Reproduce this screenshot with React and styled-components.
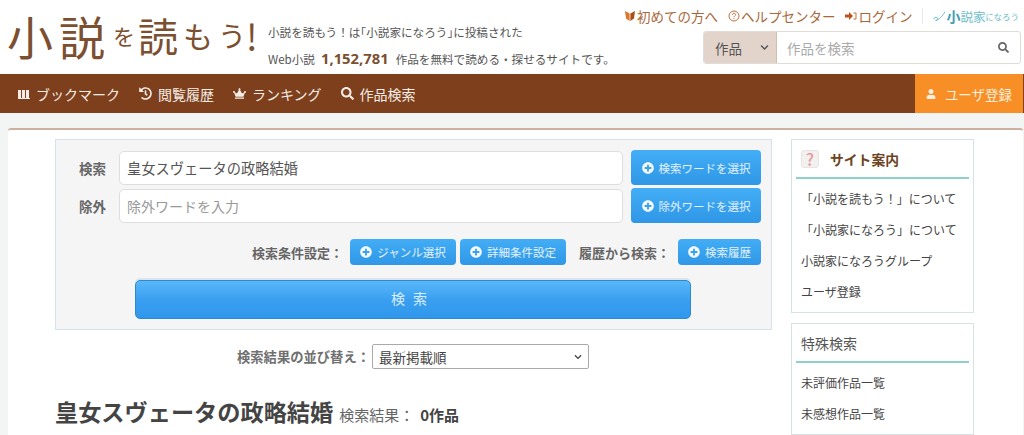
import React from "react";
import styled, { createGlobalStyle } from "styled-components";
import { FaPlusCircle, FaSearch, FaCrown, FaHistory, FaUser, FaChevronDown } from "react-icons/fa";

const FONT = `"Noto Sans CJK JP", "Noto Sans", sans-serif`;

const GlobalStyle = createGlobalStyle`
  html, body {
    margin: 0;
    padding: 0;
    height: 435px;
    overflow: hidden;
    background: #f3f4f4;
    font-family: ${FONT};
    color: #444;
  }
  * { box-sizing: border-box; }
`;

const Header = styled.header`
  height: 74px;
  background: #fff;
  display: flex;
  justify-content: space-between;
`;

const Brand = styled.div`
  display: flex;
  padding: 10px 0 0 7px;
`;

const Logo = styled.h1`
  margin: 0;
  width: 255px;
  height: 50px;
  display: flex;
  align-items: center;
  color: #7b4f30;
  font-weight: 400;
  line-height: 50px;
  white-space: nowrap;
`;

const LogoPart = styled.span`
  font-size: ${(p) => p.$size}px;
  letter-spacing: ${(p) => p.$spacing || 0}px;
  margin-left: ${(p) => p.$gap || 0}px;
`;

const Tagline = styled.div`
  padding: 9px 0 0 6px;
  font-size: 11.6px;
  color: #555;
  line-height: 26px;
  white-space: nowrap;
`;

const Bracket = styled.span`
  font-feature-settings: "halt";
`;

const Count = styled.strong`
  color: #7b4f30;
  font-family: "Open Sans", ${FONT};
  font-size: 14.8px;
  margin: 0 7px 0 6px;
`;

const TopRight = styled.div`
  padding: 6px 3px 0 0;
  display: flex;
  flex-direction: column;
  align-items: flex-end;
`;

const TopLinks = styled.div`
  display: flex;
  align-items: center;
  height: 20px;
  font-size: 13.5px;
  color: #a9683a;
  white-space: nowrap;
`;

const TopLink = styled.a`
  display: flex;
  align-items: center;
  margin-right: 10px;
  gap: 1px;
`;

const TopIcon = styled.span`
  display: flex;
  justify-content: center;
  width: 12px;
`;

const SisterLogo = styled.span`
  border-left: 1px solid #e3e8e8;
  padding-left: 10px;
  margin-right: 2px;
  height: 16px;
  display: flex;
  align-items: center;
  color: #6bbccb;
`;

const SisterPart = styled.span`
  font-size: ${(p) => p.$size}px;
  font-weight: ${(p) => (p.$bold ? 700 : 400)};
  color: ${(p) => (p.$bold ? "#3f9fb2" : "#6bbccb")};
`;

const SearchBox = styled.div`
  margin-top: 5px;
  width: 318px;
  height: 33px;
  display: flex;
  border: 1px solid #e0dcd8;
  border-radius: 3px;
  background: #fff;
  overflow: hidden;
`;

const SearchKind = styled.div`
  width: 73px;
  background: #e3d4cb;
  border-right: 1px solid #d2bdb0;
  display: flex;
  align-items: center;
  justify-content: space-between;
  padding: 0 7px 0 11px;
  font-size: 13.5px;
  color: #555;
`;

const SearchHint = styled.div`
  flex: 1;
  display: flex;
  align-items: center;
  justify-content: space-between;
  padding: 0 11px 0 10px;
  font-size: 13.5px;
  color: #aaa;
`;

const Nav = styled.nav`
  height: 39px;
  background: #7e401c;
  display: flex;
  justify-content: space-between;
  padding-right: 1px;
  color: #fff;
`;

const NavList = styled.div`
  display: flex;
  align-items: center;
  padding-left: 18px;
  gap: 19px;
`;

const NavItem = styled.a`
  display: flex;
  align-items: center;
  gap: 6px;
  font-size: 14px;
  color: #f4ece6;
`;

const NavIcon = styled.span`
  display: flex;
  font-size: 13px;
`;

const SignUp = styled.a`
  width: 108px;
  background: #f78f26;
  display: flex;
  align-items: center;
  justify-content: center;
  gap: 9px;
  font-size: 13.5px;
  color: #fdeedd;
`;

const Sheet = styled.div`
  margin: 15px 1px 0 8px;
  background: #fff;
  border-top: 2px solid #cdb09f;
  border-radius: 3px 3px 0 0;
  padding: 9px 49px 0 47px;
  display: flex;
  justify-content: space-between;
  height: 320px;
`;

const Main = styled.main`
  width: 717px;
`;

const Panel = styled.section`
  height: 191px;
  background: #f5f5f6;
  border: 1px solid #d6e3ee;
  padding: 10px 10px 0 0;
`;

const FieldRow = styled.div`
  display: flex;
  align-items: center;
  height: 35px;
  margin-bottom: 3px;
`;

const FieldLabel = styled.label`
  width: 50px;
  text-align: right;
  font-size: 13.5px;
  font-weight: 700;
  color: #666;
  white-space: nowrap;
`;

const Field = styled.div`
  margin-left: 13px;
  width: 504px;
  height: 34px;
  background: #fff;
  border: 1px solid #dedede;
  border-radius: 5px;
  display: flex;
  align-items: center;
  padding: 0 7px;
  font-size: ${(p) => (p.$hint ? 14 : 14.25)}px;
  color: ${(p) => (p.$hint ? "#999" : "#555")};
`;

const PickButton = styled.button`
  margin-left: 8px;
  height: ${(p) => (p.$small ? 26 : 35)}px;
  width: ${(p) => p.$width}px;
  border: none;
  border-radius: 4px;
  background: linear-gradient(#43adf6, #2f97e6);
  color: #e3f2fd;
  font-family: ${FONT};
  font-size: 11.5px;
  display: flex;
  align-items: center;
  justify-content: center;
  gap: 5px;
  padding: 0;
  white-space: nowrap;
`;

const PlusIcon = styled(FaPlusCircle)`
  color: #f4f9fd;
  font-size: 12px;
  flex-shrink: 0;
`;

const ConditionRow = styled.div`
  display: flex;
  justify-content: flex-end;
  align-items: center;
  margin-top: 16px;
  height: 26px;
`;

const ConditionLabel = styled.span`
  font-size: 13px;
  font-weight: 700;
  color: #666;
  margin-left: ${(p) => p.$gap || 0}px;
  white-space: nowrap;
`;

const SmallButton = styled(PickButton)`
  margin-left: ${(p) => p.$gap}px;
`;

const SubmitButton = styled.button`
  display: block;
  margin: 15px 0 0 79px;
  width: 556px;
  height: 39px;
  border: 1px solid #2b8ad0;
  border-radius: 5px;
  background: linear-gradient(#5ab8f9, #3a9ff0 50%, #2f97ec);
  color: #d9eefc;
  font-family: ${FONT};
  font-size: 14px;
  letter-spacing: 8px;
  padding: 0 0 3px;
  box-shadow: 0 -2px 0 #dde3e8;
`;

const SortRow = styled.div`
  margin-top: 14px;
  display: flex;
  justify-content: center;
  align-items: center;
  padding-right: 1px;
  gap: 2px;
  font-size: 13.3px;
  font-weight: 700;
  color: #707070;
`;

const SortSelect = styled.div`
  width: 217px;
  height: 25px;
  background: #fff;
  border: 1px solid #aaa;
  border-radius: 2px;
  display: flex;
  align-items: center;
  justify-content: space-between;
  padding: 0 6px;
  font-size: 13.5px;
  font-weight: 400;
  color: #444;
`;

const ResultHead = styled.div`
  margin-top: 26px;
  display: flex;
  align-items: baseline;
  color: #444;
`;

const ResultTitle = styled.h2`
  margin: 0;
  font-size: 23.2px;
  line-height: 32px;
  font-weight: 700;
`;

const ResultNote = styled.span`
  margin-left: 6px;
  font-size: 15px;
  color: #666;
`;

const ResultCount = styled.b`
  margin-left: 6px;
  font-size: 15px;
  color: #444;
`;

const Side = styled.aside`
  width: 183px;
  display: flex;
  flex-direction: column;
  gap: 10px;
`;

const Card = styled.section`
  border: 1px solid #d5e3e3;
  padding: 0 4px;
  background: #fff;
`;

const CardTitle = styled.h3`
  margin: 0;
  height: 39px;
  display: flex;
  align-items: center;
  gap: 11px;
  padding-left: 5px;
  border-bottom: 2px solid #8fd0cc;
  font-size: ${(p) => (p.$plain ? 14 : 13.8)}px;
  font-weight: ${(p) => (p.$plain ? 400 : 700)};
  color: ${(p) => (p.$plain ? "#555" : "#6d4423")};
`;

const HelpBadge = styled.span`
  width: 18px;
  height: 18px;
  background: #f3f0f0;
  border: 1px solid #e9e4e4;
  border-radius: 3px;
  color: #e59a9c;
  font-size: 17px;
  font-weight: 500;
  line-height: 16px;
  text-align: center;
`;

const CardLinks = styled.ul`
  list-style: none;
  margin: 0;
  padding: 4px 0 5px;
`;

const CardLink = styled.li`
  height: 31px;
  line-height: 31px;
  padding-left: 5px;
  font-size: 12px;
  color: #444;
  white-space: nowrap;
`;

const BookIcon = () => (
  <svg width="12" height="10" viewBox="0 0 12 10" fill="currentColor">
    <rect x="0" y="1" width="3" height="8" />
    <rect x="4" y="1" width="3" height="8" />
    <rect x="8" y="1" width="3" height="8" />
    <rect x="0" y="9" width="12" height="1" />
  </svg>
);

const BeginnerIcon = () => (
  <svg width="10" height="12" viewBox="0 0 10 12">
    <path d="M0 1 L4.6 3.5 V11 L1 8.5 Z" fill="#d9772b" />
    <path d="M10 1 L5.4 3.5 V11 L9 8.5 Z" fill="#a8501c" />
  </svg>
);

const HelpIcon = () => (
  <svg width="12" height="12" viewBox="0 0 12 12" fill="none" stroke="#c0703a">
    <circle cx="6" cy="6" r="5" />
    <path d="M4.4 4.8 C4.4 2.8 7.6 2.8 7.6 4.6 C7.6 5.8 6 5.8 6 7.2 M6 8.2 V9.2" />
  </svg>
);

const LoginIcon = () => (
  <svg width="12" height="10" viewBox="0 0 12 10">
    <path d="M0 3.5 H4 V1 L8 5 L4 9 V6.5 H0 Z" fill="#c0501c" />
    <path d="M8.5 2 H11 V8 H8.5" fill="none" stroke="#c0703a" />
  </svg>
);

const SwooshIcon = () => (
  <svg width="13" height="14" viewBox="0 0 15 14" fill="none" stroke="#6bbccb" strokeWidth="1.1">
    <path d="M1 10.5 C1 8.5 3.5 8 5 9 C6.5 10.5 5 12.5 3 12 M3 12 C7 11.5 11 7 14 2" />
  </svg>
);

const App = () => (
  <>
    <GlobalStyle />
    <Header>
      <Brand>
        <Logo>
          <LogoPart $size={46} $spacing={6}>小説</LogoPart>
          <LogoPart $size={22} $gap={2}>を</LogoPart>
          <LogoPart $size={40} $gap={3}>読</LogoPart>
          <LogoPart $size={30} $gap={5}>も</LogoPart>
          <LogoPart $size={28} $gap={5}>う</LogoPart>
          <LogoPart $size={36}>!</LogoPart>
        </Logo>
        <Tagline>
          小説を読もう！は<Bracket>「</Bracket>小説家になろう<Bracket>」</Bracket>に投稿された
          <br />
          Web小説<Count>1,152,781</Count>作品を無料で読める・探せるサイトです。
        </Tagline>
      </Brand>
      <TopRight>
        <TopLinks>
          <TopLink><TopIcon><BeginnerIcon /></TopIcon>初めての方へ</TopLink>
          <TopLink><TopIcon><HelpIcon /></TopIcon>ヘルプセンター</TopLink>
          <TopLink><TopIcon><LoginIcon /></TopIcon>ログイン</TopLink>
          <SisterLogo>
            <SwooshIcon />
            <SisterPart $size={14} $bold>小</SisterPart>
            <SisterPart $size={12.5}>説家</SisterPart>
            <SisterPart $size={8}>に</SisterPart>
            <SisterPart $size={8.5}>なろう</SisterPart>
          </SisterLogo>
        </TopLinks>
        <SearchBox>
          <SearchKind>作品<FaChevronDown size={9} /></SearchKind>
          <SearchHint>作品を検索<FaSearch size={11} color="#666" /></SearchHint>
        </SearchBox>
      </TopRight>
    </Header>
    <Nav>
      <NavList>
        <NavItem><NavIcon><BookIcon /></NavIcon>ブックマーク</NavItem>
        <NavItem><NavIcon><FaHistory /></NavIcon>閲覧履歴</NavItem>
        <NavItem><NavIcon><FaCrown /></NavIcon>ランキング</NavItem>
        <NavItem><NavIcon><FaSearch /></NavIcon>作品検索</NavItem>
      </NavList>
      <SignUp><FaUser size={10} />ユーザ登録</SignUp>
    </Nav>
    <Sheet>
      <Main>
        <Panel>
          <FieldRow>
            <FieldLabel>検索</FieldLabel>
            <Field>皇女スヴェータの政略結婚</Field>
            <PickButton $width={130}><PlusIcon />検索ワードを選択</PickButton>
          </FieldRow>
          <FieldRow>
            <FieldLabel>除外</FieldLabel>
            <Field $hint>除外ワードを入力</Field>
            <PickButton $width={130}><PlusIcon />除外ワードを選択</PickButton>
          </FieldRow>
          <ConditionRow>
            <ConditionLabel>検索条件設定：</ConditionLabel>
            <SmallButton $small $width={106} $gap={7}><PlusIcon />ジャンル選択</SmallButton>
            <SmallButton $small $width={106} $gap={4}><PlusIcon />詳細条件設定</SmallButton>
            <ConditionLabel $gap={13}>履歴から検索：</ConditionLabel>
            <SmallButton $small $width={83} $gap={8}><PlusIcon />検索履歴</SmallButton>
          </ConditionRow>
          <SubmitButton>検索</SubmitButton>
        </Panel>
        <SortRow>
          検索結果の並び替え：
          <SortSelect>最新掲載順<FaChevronDown size={8} /></SortSelect>
        </SortRow>
        <ResultHead>
          <ResultTitle>皇女スヴェータの政略結婚</ResultTitle>
          <ResultNote>検索結果：</ResultNote>
          <ResultCount>0作品</ResultCount>
        </ResultHead>
      </Main>
      <Side>
        <Card>
          <CardTitle><HelpBadge>?</HelpBadge>サイト案内</CardTitle>
          <CardLinks>
            <CardLink>「小説を読もう！」について</CardLink>
            <CardLink>「小説家になろう」について</CardLink>
            <CardLink>小説家になろうグループ</CardLink>
            <CardLink>ユーザ登録</CardLink>
          </CardLinks>
        </Card>
        <Card>
          <CardTitle $plain>特殊検索</CardTitle>
          <CardLinks>
            <CardLink>未評価作品一覧</CardLink>
            <CardLink>未感想作品一覧</CardLink>
          </CardLinks>
        </Card>
      </Side>
    </Sheet>
  </>
);

export default App;
